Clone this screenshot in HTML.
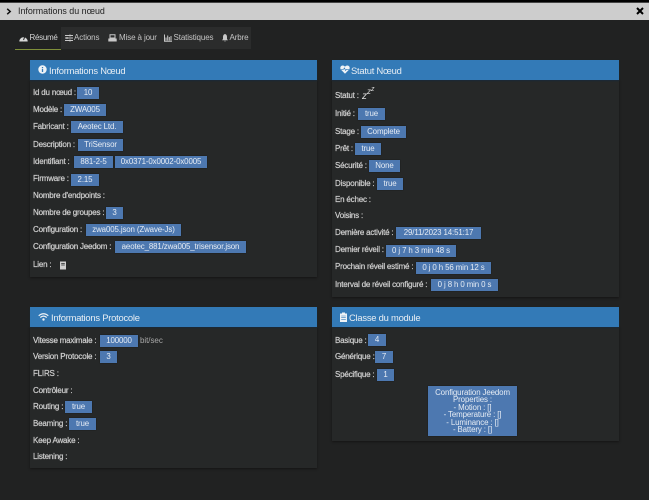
<!DOCTYPE html>
<html><head><meta charset="utf-8"><style>
html,body{margin:0;padding:0;width:649px;height:500px;overflow:hidden;background:#212222}
body{position:relative;font-family:"Liberation Sans",sans-serif;font-size:8.4px;color:#d0d0d0}
div,span,svg{position:absolute;white-space:nowrap}
.p{background:#262828;box-shadow:0 1px 2px #151515}
.h{background:#337ab7;color:#e8eef4;font-size:9.4px;letter-spacing:-.23px;line-height:20px;height:20px;box-shadow:0 1px 1px #1a2a38}
.h span{top:.5px}
.l{font-size:8px;line-height:12px;color:#d8d8d8;letter-spacing:-.2px;-webkit-text-stroke:.25px #c0c0c0}
.b{background:#4d78b0;color:#e6ecf4;text-align:center;font-size:7.9px;letter-spacing:-.12px;line-height:12px;height:12px;box-shadow:0 0 1px #111}
.t{font-size:8px;letter-spacing:-.12px;line-height:12px;color:#c4c4c4;top:32px}
</style></head><body>
<div style="left:0;top:0;width:649px;height:2px;background:#000"></div>
<div style="left:0;top:2px;width:649px;height:1px;background:#444"></div>
<div style="left:0;top:3px;width:649px;height:17px;background:#cdcdcd"></div>
<svg style="left:6px;top:8px" width="6" height="7" viewBox="0 0 6 7"><path d="M1.200 .8L4.200 3.500L1.200 6.200" fill="none" stroke="#111" stroke-width="1.500"/></svg>
<div style="left:18px;top:5px;font-size:8.900px;line-height:13px;color:#222">Informations du nœud</div>
<svg style="left:636px;top:7px" width="8" height="8" viewBox="0 0 8 8"><path d="M1 1L7 7M7 1L1 7" stroke="#000" stroke-width="2"/></svg>

<div style="left:61px;top:27px;width:190px;height:22px;background:#2b2c2c"></div>
<div style="left:15px;top:49px;width:46px;height:1px;background:#7f8f3a"></div>
<svg style="left:19px;top:34px" width="9" height="8" viewBox="0 0 9 8"><path d="M.3 7.500A4.200 4.200 0 1 1 8.700 7.500Z" fill="#d8d8d8"/><path d="M4.500 6L5.800 2.800" stroke="#2a2a2a" stroke-width="1"/></svg>
<div class="t" style="left:29.5px;color:#d4d4d4;letter-spacing:-.3px">Résumé</div>
<svg style="left:65px;top:34px" width="8" height="8" viewBox="0 0 8 8"><path d="M0 1.500H8M0 4H8M0 6.500H8" stroke="#c8c8c8" stroke-width="1"/><path d="M5 .5V2.500M2 3V5M5 5.500V7.500" stroke="#c8c8c8" stroke-width="1"/></svg>
<div class="t" style="left:74px">Actions</div>
<svg style="left:108px;top:34px" width="9" height="8" viewBox="0 0 9 8"><path d="M2 .8H7V4H2Z" fill="none" stroke="#c8c8c8"/><path d="M.3 4.500H8.700V7.500H.3Z" fill="#c8c8c8"/></svg>
<div class="t" style="left:119px">Mise à jour</div>
<svg style="left:164px;top:34px" width="8" height="8" viewBox="0 0 8 8"><path d="M.5 .5V7.200H8" fill="none" stroke="#c8c8c8"/><path d="M2 6.500V3.500M3.700 6.500V1.500M5.300 6.500V3M7 6.500V2" stroke="#c8c8c8" stroke-width="1"/></svg>
<div class="t" style="left:173.5px">Statistiques</div>
<svg style="left:222px;top:34px" width="6" height="8" viewBox="0 0 6 8"><path d="M3 0Q5 .5 5 3V5L6 6.200H0L1 5V3Q1 .5 3 0ZM2.200 6.700H3.800L3 7.800Z" fill="#c8c8c8"/></svg>
<div class="t" style="left:229.5px">Arbre</div>

<!-- Informations Noeud -->
<div class="p" style="left:30px;top:80px;width:287px;height:197px"></div>
<div class="h" style="left:30px;top:60px;width:287px"><span style="left:19px">Informations Nœud</span></div>
<svg style="left:38px;top:65px" width="9" height="9" viewBox="0 0 9 9"><circle cx="4.500" cy="4.500" r="4.200" fill="#eef2f6"/><path d="M4.500 2V3M4.500 3.800V7" stroke="#337ab7" stroke-width="1.300"/></svg>
<div class="l" style="left:33px;top:87px">Id du nœud :</div><div class="b" style="left:77px;top:87px;width:22px">10</div>
<div class="l" style="left:33px;top:104px">Modèle :</div><div class="b" style="left:64px;top:104px;width:42px">ZWA005</div>
<div class="l" style="left:33px;top:121px">Fabricant :</div><div class="b" style="left:71px;top:121px;width:52px">Aeotec Ltd.</div>
<div class="l" style="left:33px;top:139px">Description :</div><div class="b" style="left:78px;top:139px;width:45px">TriSensor</div>
<div class="l" style="left:33px;top:156px">Identifiant :</div><div class="b" style="left:74px;top:156px;width:39px">881-2-5</div><div class="b" style="left:115px;top:156px;width:92px">0x0371-0x0002-0x0005</div>
<div class="l" style="left:33px;top:173px">Firmware :</div><div class="b" style="left:71px;top:174px;width:28px">2.15</div>
<div class="l" style="left:33px;top:190px">Nombre d'endpoints :</div>
<div class="l" style="left:33px;top:207px">Nombre de groupes :</div><div class="b" style="left:106px;top:207px;width:17px">3</div>
<div class="l" style="left:33px;top:224px">Configuration :</div><div class="b" style="left:86px;top:224px;width:95px">zwa005.json (Zwave-Js)</div>
<div class="l" style="left:33px;top:241px">Configuration Jeedom :</div><div class="b" style="left:115px;top:241px;width:131px">aeotec_881/zwa005_trisensor.json</div>
<div class="l" style="left:33px;top:259px">Lien :</div>
<svg style="left:59px;top:261px" width="8" height="9" viewBox="0 0 8 9"><path d="M1 .5H7V8.500H1Z" fill="#d0d0d0"/><path d="M2.200 2.500H5.800M2.200 4H5.800" stroke="#262828" stroke-width=".8"/></svg>

<!-- Statut -->
<div class="p" style="left:332px;top:80px;width:287px;height:217px"></div>
<div class="h" style="left:332px;top:60px;width:287px"><span style="left:19px">Statut Nœud</span></div>
<svg style="left:340px;top:65px" width="10" height="9" viewBox="0 0 10 9"><path d="M5 8.700L.8 4.500Q-.3 2.800 .9 1.200Q3 -.4 5 1.600Q7 -.4 9.100 1.200Q10.300 2.800 9.200 4.500Z" fill="#eef2f6"/><path d="M1 4.300H3.500L4.500 3L5.500 5.500L6.500 4.300H9" fill="none" stroke="#337ab7" stroke-width=".7"/></svg>
<div class="l" style="left:335px;top:90px">Statut :</div>
<div style="left:362px;top:91px;font-size:10px;line-height:12px;font-style:italic;color:#ddd">z</div>
<div style="left:367px;top:87px;font-size:8px;line-height:10px;font-style:italic;color:#ddd">z</div>
<div style="left:371px;top:85px;font-size:7px;line-height:9px;font-style:italic;color:#ddd">z</div>
<div class="l" style="left:335px;top:108px">Initié :</div><div class="b" style="left:358px;top:108px;width:27px">true</div>
<div class="l" style="left:335px;top:126px">Stage :</div><div class="b" style="left:361px;top:126px;width:45px">Complete</div>
<div class="l" style="left:335px;top:143px">Prêt :</div><div class="b" style="left:355px;top:143px;width:26px">true</div>
<div class="l" style="left:335px;top:160px">Sécurité :</div><div class="b" style="left:369px;top:160px;width:31px">None</div>
<div class="l" style="left:335px;top:178px">Disponible :</div><div class="b" style="left:377px;top:178px;width:26px">true</div>
<div class="l" style="left:335px;top:194px">En échec :</div>
<div class="l" style="left:335px;top:210px">Voisins :</div>
<div class="l" style="left:335px;top:227px">Dernière activité :</div><div class="b" style="left:396px;top:227px;width:85px">29/11/2023 14:51:17</div>
<div class="l" style="left:335px;top:244px">Dernier réveil :</div><div class="b" style="left:386px;top:245px;width:70px">0 j 7 h 3 min 48 s</div>
<div class="l" style="left:335px;top:261px">Prochain réveil estimé :</div><div class="b" style="left:416px;top:262px;width:75px">0 j 0 h 56 min 12 s</div>
<div class="l" style="left:335px;top:279px">Interval de réveil configuré :</div><div class="b" style="left:431px;top:279px;width:67px">0 j 8 h 0 min 0 s</div>

<!-- Protocole -->
<div class="p" style="left:30px;top:327px;width:287px;height:141px"></div>
<div class="h" style="left:30px;top:307px;width:287px"><span style="left:21px">Informations Protocole</span></div>
<svg style="left:38px;top:313px" width="11" height="8" viewBox="0 0 11 8"><path d="M.7 2.800Q5.500 -1.300 10.300 2.800M2.300 4.500Q5.500 1.800 8.700 4.500" fill="none" stroke="#eef2f6" stroke-width="1.200"/><circle cx="5.500" cy="6.500" r="1.200" fill="#eef2f6"/></svg>
<div class="l" style="left:33px;top:335px">Vitesse maximale :</div><div class="b" style="left:100px;top:335px;width:38px">100000</div>
<div style="left:140px;top:335px;font-size:8px;letter-spacing:-.05px;line-height:12px;color:#a8a8a8">bit/sec</div>
<div class="l" style="left:33px;top:351px">Version Protocole :</div><div class="b" style="left:100px;top:351px;width:17px">3</div>
<div class="l" style="left:33px;top:368px">FLIRS :</div>
<div class="l" style="left:33px;top:385px">Contrôleur :</div>
<div class="l" style="left:33px;top:401px">Routing :</div><div class="b" style="left:65px;top:401px;width:27px">true</div>
<div class="l" style="left:33px;top:418px">Beaming :</div><div class="b" style="left:69px;top:418px;width:27px">true</div>
<div class="l" style="left:33px;top:435px">Keep Awake :</div>
<div class="l" style="left:33px;top:451px">Listening :</div>

<!-- Classe -->
<div class="p" style="left:332px;top:327px;width:287px;height:114px"></div>
<div class="h" style="left:332px;top:307px;width:287px"><span style="left:17px">Classe du module</span></div>
<svg style="left:340px;top:312px" width="7" height="10" viewBox="0 0 7 10"><path d="M0 1.500H7V10H0Z" fill="#eef2f6"/><path d="M2 .5H5V2.200H2Z" fill="#eef2f6"/><path d="M1.200 4H5.800M1.200 5.700H5.800M1.200 7.400H5.800" stroke="#337ab7" stroke-width=".6"/></svg>
<div class="l" style="left:335px;top:335px">Basique :</div><div class="b" style="left:368px;top:334px;width:18px">4</div>
<div class="l" style="left:335px;top:351px">Générique :</div><div class="b" style="left:375px;top:351px;width:18px">7</div>
<div class="l" style="left:335px;top:369px">Spécifique :</div><div class="b" style="left:377px;top:369px;width:17px">1</div>
<div class="b" style="left:428px;top:386px;width:89px;height:50px;line-height:7.600px;font-size:7.900px;padding-top:2.500px;box-sizing:border-box">Configuration Jeedom<br>Properties :<br>- Motion : []<br>- Temperature : []<br>- Luminance : []<br>- Battery : []</div>
</body></html>
